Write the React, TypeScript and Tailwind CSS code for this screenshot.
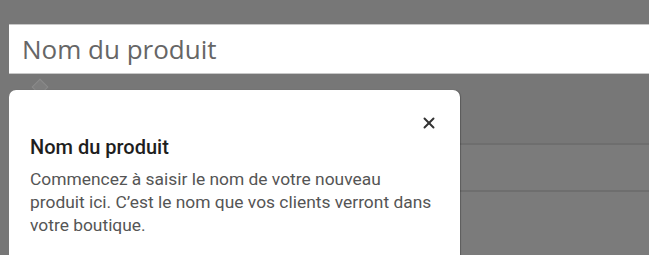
import { X } from "lucide-react";

export default function App() {
  return (
    <div className="h-[255px] w-[649px] overflow-hidden bg-[#777777] pt-[24px]">
      {/* champ du nom du produit, mis en avant au-dessus du voile */}
      <div className="ml-[9px] flex h-[50px] items-center border-y border-[#c8c8c8] bg-white pl-[13px]">
        <span
          className="text-[26px] text-[#666666]"
          style={{ fontFamily: "'Open Sans', sans-serif" }}
        >
          Nom du produit
        </span>
      </div>

      <div className="relative flex">
        {/* flèche de l'info-bulle, presque invisible */}
        <div className="absolute left-[34px] top-[7px] h-[12px] w-[12px] rotate-45 border border-white/10 bg-white/5" />

        {/* info-bulle */}
        <div
          className="relative ml-[9px] mt-[16px] h-[200px] w-[451px] shrink-0 rounded-t-[7px] bg-white pl-[21px] pr-[26px] pt-[45px] shadow-[1px_0_1px_rgba(0,0,0,0.25)]"
          style={{ fontFamily: "Roboto, sans-serif" }}
        >
          <button className="absolute right-[22px] top-[24px] text-[#333333]">
            <X size={18} strokeWidth={2.6} />
          </button>
          <h3 className="text-[20px] font-medium leading-[24px] text-[#1e1e1e]">
            Nom du produit
          </h3>
          <p className="mt-[9px] text-[17.4px] leading-[23px] text-[#555555]">
            Commencez à saisir le nom de votre nouveau produit ici. C’est le nom que vos clients verront dans votre boutique.
          </p>
        </div>

        {/* lignes du formulaire en arrière-plan */}
        <div className="flex-1 pt-[69px]">
          <div className="h-[47px] border-t-2 border-[#6e6e6e] bg-[#7b7b7b]" />
          <div className="h-[80px] border-t-2 border-[#6e6e6e] bg-[#7b7b7b]" />
        </div>
      </div>
    </div>
  );
}
